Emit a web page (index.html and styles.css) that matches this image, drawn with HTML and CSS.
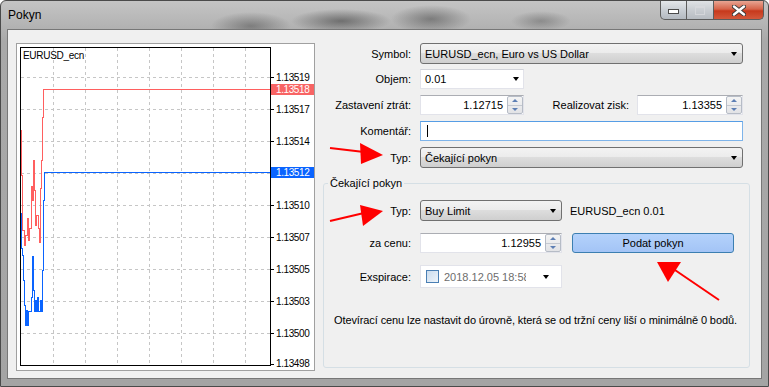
FILE: index.html
```html
<!DOCTYPE html>
<html lang="cs">
<head>
  <meta charset="UTF-8">
  <title>Pokyn</title>
  <link rel="stylesheet" href="styles.css">
</head>
<body>
  <div class="window">
    <div class="titlebar">
      <span class="title">Pokyn</span>
      <div class="caption">
        <span class="cap min"><i></i></span>
        <span class="cap max"><i></i></span>
        <span class="cap close">
          <svg width="14" height="11" viewBox="0 0 14 11">
            <path d="M2 1.5L12 9.5M12 1.5L2 9.5" stroke="#3a3a3a" stroke-width="4.2" stroke-linecap="round"/>
            <path d="M2 1.5L12 9.5M12 1.5L2 9.5" stroke="#fff" stroke-width="2.4" stroke-linecap="round"/>
          </svg>
        </span>
      </div>
    </div>

    <div class="client">
      <div class="chart-panel">
        <svg class="chart" width="297" height="326" viewBox="17 44 297 326">
          <rect x="17" y="44" width="297" height="326" fill="#fff"/>
          <path class="grid" d="M53.5 48V365M85.5 48V365M117.5 48V365M149.5 48V365M181.5 48V365M213.5 48V365M245.5 48V365"/>
          <path class="grid" d="M21 77.5H270M21 109.5H270M21 141.5H270M21 173.5H270M21 205.5H270M21 237.5H270M21 269.5H270M21 301.5H270M21 333.5H270"/>
          <rect x="20.5" y="47.5" width="250" height="318" fill="none" stroke="#000"/>
          <path stroke="#000" d="M270 77.5h4M270 109.5h4M270 141.5h4M270 173.5h4M270 205.5h4M270 237.5h4M270 269.5h4M270 301.5h4M270 333.5h4M270 364.5h4"/>

          <path class="ask" d="M21.5 130V175H22.5V230H24.5V245H25.5V235H27.5V218H28.5V240H29.5V228H31.5V186H32.5V200H33.5V160H34.5V190H35.5V225H36.5V215H38.5V228H39.5V242H40.5V188H41.5V160H42.5V117H43.5V89.5H270"/>
          <path class="bid" d="M21.5 213V248H22.5V255H23.5V280H24.5V305H25.5V325H26.5V310H27.5V325H28.5V311H31.5V297H32.5V256H33.5V290H34.5V311H35.5V300H36.5V311H37.5V297H38.5V311H40.5V300H41.5V311H42.5V270H43.5V200H44.5V172.5H270"/>

          <text class="sym" x="23" y="59">EURUSD_ecn</text>

          <g class="axis">
            <text x="276" y="81">1.13519</text>
            <rect x="271" y="84" width="43" height="11" fill="#f86464"/>
            <text x="276" y="93" fill="#fff">1.13518</text>
            <text x="276" y="113">1.13517</text>
            <text x="276" y="145">1.13514</text>
            <rect x="271" y="167" width="43" height="11" fill="#0a64ff"/>
            <text x="276" y="176" fill="#fff">1.13512</text>
            <text x="276" y="209">1.13510</text>
            <text x="276" y="241">1.13507</text>
            <text x="276" y="273">1.13505</text>
            <text x="276" y="305">1.13503</text>
            <text x="276" y="337">1.13500</text>
            <text x="276" y="367">1.13498</text>
          </g>
        </svg>
      </div>

      <div class="order-form">
        <div class="row r-symbol">
          <label>Symbol:</label>
          <div class="combo grow">EURUSD_ecn, Euro vs US Dollar<span class="caret"></span></div>
        </div>
        <div class="row">
          <label>Objem:</label>
          <div class="edit-combo w104">0.01<span class="caret"></span></div>
        </div>
        <div class="row">
          <label>Zastavení ztrát:</label>
          <div class="spin w104"><span class="val">1.12715</span><span class="arrows"><b class="up"></b><b class="down"></b></span></div>
          <span class="side-label">Realizovat zisk:</span>
          <div class="spin w106"><span class="val">1.13355</span><span class="arrows"><b class="up"></b><b class="down"></b></span></div>
        </div>
        <div class="row">
          <label>Komentář:</label>
          <div class="text-input grow"><span class="cursor"></span></div>
        </div>
        <div class="row r-type">
          <label>Typ:</label>
          <div class="combo grow">Čekající pokyn<span class="caret"></span></div>
        </div>

        <fieldset class="pending">
          <legend>Čekající pokyn</legend>
          <div class="row r-type">
            <label>Typ:</label>
            <div class="combo w142">Buy Limit<span class="caret"></span></div>
            <span class="order-info">EURUSD_ecn 0.01</span>
          </div>
          <div class="row">
            <label>za cenu:</label>
            <div class="spin w142"><span class="val">1.12955</span><span class="arrows"><b class="up"></b><b class="down"></b></span></div>
            <button class="submit">Podat pokyn</button>
          </div>
          <div class="row r-date">
            <label>Exspirace:</label>
            <div class="date w142"><span class="check"></span><span class="date-text">2018.12.05 18:58</span><span class="caret"></span></div>
          </div>
          <p class="note">Otevírací cenu lze nastavit do úrovně, která se od tržní ceny liší o minimálně 0 bodů.</p>
        </fieldset>
      </div>
    </div>

    <svg class="arrows-overlay" width="769" height="387" viewBox="0 0 769 387">
      <path d="M330 148L364 152" stroke="#f00" stroke-width="2"/>
      <polygon points="360,143 383,155 361,164" fill="#f00"/>
      <path d="M330 221L364 213" stroke="#f00" stroke-width="2"/>
      <polygon points="360,205 383,211 363,226" fill="#f00"/>
      <path d="M719 300L672 268" stroke="#f00" stroke-width="2"/>
      <polygon points="657,262 681,262 668,282" fill="#f00"/>
    </svg>
  </div>
</body>
</html>
```

FILE: styles.css
```css
body {
  margin: 0;
  background: #fff;
  font-family: "Liberation Sans", Arial, sans-serif;
  font-size: 11px;
  color: #000;
}

.window {
  position: relative;
  width: 769px;
  height: 387px;
  box-sizing: border-box;
  border: 1px solid #4a4a4a;
  border-radius: 6px 6px 0 0;
  background:
    radial-gradient(ellipse 40px 14px at 250px 25px, rgba(60, 60, 60, 0.45), transparent),
    radial-gradient(ellipse 50px 12px at 340px 20px, rgba(40, 40, 40, 0.5), transparent),
    radial-gradient(ellipse 40px 14px at 430px 18px, rgba(50, 50, 50, 0.45), transparent),
    radial-gradient(ellipse 30px 10px at 540px 20px, rgba(60, 60, 60, 0.35), transparent),
    linear-gradient(#c4c4c4, #a9a9a9 40px, #a4a4a4);
  overflow: hidden;
}

.titlebar {
  height: 28px;
  display: flex;
  align-items: flex-start;
  padding-left: 7px;
}

.title {
  font-size: 12px;
  line-height: 28px;
  color: #000;
}

.caption {
  margin-left: auto;
  margin-right: 4px;
  display: flex;
}

.cap {
  height: 19px;
  display: flex;
  align-items: center;
  justify-content: center;
  border: 1px solid #5c5c5c;
  border-top: none;
  box-sizing: border-box;
}

.min {
  width: 27px;
  border-radius: 0 0 0 5px;
  background: linear-gradient(#e4e7ea, #c9ced4 50%, #b3b9c0);
}

.min i {
  width: 9px;
  height: 3px;
  margin-top: 3px;
  background: #fff;
  border: 1px solid #4b4b4b;
}

.max {
  width: 27px;
  border-left: none;
  background: linear-gradient(#dfe2e5, #c9cdd2 50%, #b7bcc2);
}

.max i {
  width: 8px;
  height: 6px;
  border: 1px solid #d8dadd;
  border-top-width: 2px;
  opacity: 0.8;
}

.close {
  width: 50px;
  border-left: none;
  border-radius: 0 0 5px 0;
  background: linear-gradient(#e8a593, #d6644a 45%, #c7391c 55%, #d3583b);
}

.client {
  height: 350px;
  margin: 0 6px;
  box-sizing: border-box;
  border: 1px solid #777;
  background: #f0f0f0;
  display: flex;
  padding: 13px 0 0 8px;
}

.chart-panel {
  width: 297px;
  height: 326px;
  border: 1px solid #a0a0a0;
  flex-shrink: 0;
}

.chart {
  display: block;
}

.grid {
  stroke: #c6c6c6;
  stroke-dasharray: 3 3;
  fill: none;
}

.ask {
  stroke: #ff5f5f;
  fill: none;
  shape-rendering: crispEdges;
}

.bid {
  stroke: #0a64ff;
  fill: none;
  shape-rendering: crispEdges;
}

.sym {
  font-family: "Liberation Sans", Arial, sans-serif;
  font-size: 10px;
  letter-spacing: -0.3px;
}

.axis text {
  font-family: "Liberation Sans", Arial, sans-serif;
  font-size: 10px;
  letter-spacing: -0.4px;
}

.order-form {
  width: 427px;
  margin-left: 8px;
  display: flex;
  flex-direction: column;
}

.row {
  display: flex;
  align-items: center;
  height: 20px;
  margin-top: 6px;
  padding-right: 7px;
}

.r-symbol {
  margin-top: 0;
  height: 21px;
}

.row + .row:nth-child(2) {
  margin-top: 5px;
}

.r-type {
  height: 21px;
}

.row label {
  width: 88px;
  margin-right: 9px;
  text-align: right;
  flex-shrink: 0;
}

.grow {
  flex: 1;
}

.w104 { width: 104px; }
.w106 { width: 106px; }
.w142 { width: 142px; }

.combo {
  height: 21px;
  box-sizing: border-box;
  border: 1px solid #707070;
  border-radius: 3px;
  background: linear-gradient(#f3f3f3, #ebebeb 50%, #dddddd 50%, #cfcfcf);
  display: flex;
  align-items: center;
  padding-left: 4px;
}

.caret {
  margin-left: auto;
  margin-right: 5px;
  width: 0;
  height: 0;
  border-left: 3.5px solid transparent;
  border-right: 3.5px solid transparent;
  border-top: 4px solid #000;
}

.edit-combo {
  height: 20px;
  box-sizing: border-box;
  border: 1px solid #e2e3ea;
  border-top-color: #d2d4da;
  background: #fff;
  display: flex;
  align-items: center;
  padding-left: 4px;
}

.edit-combo .caret {
  margin-right: 4px;
}

.spin {
  height: 20px;
  box-sizing: border-box;
  border: 1px solid #e2e3ea;
  border-top-color: #abadb3;
  background: #fff;
  display: flex;
  align-items: center;
}

.spin .val {
  flex: 1;
  text-align: right;
  padding-right: 4px;
}

.arrows {
  width: 16px;
  height: 18px;
  display: flex;
  flex-direction: column;
  border: 1px solid #b6bcc6;
  border-radius: 2px;
  box-sizing: border-box;
  background: linear-gradient(#f4f4f4, #e2e3e6);
}

.arrows b {
  flex: 1;
  display: flex;
  align-items: center;
  justify-content: center;
}

.arrows .up {
  border-bottom: 1px solid #c4c9d1;
}

.arrows .up::after,
.arrows .down::after {
  content: "";
  border-left: 3px solid transparent;
  border-right: 3px solid transparent;
}

.arrows .up::after {
  border-bottom: 3px solid #5d7fb4;
}

.arrows .down::after {
  border-top: 3px solid #5d7fb4;
}

.side-label {
  flex: 1;
  text-align: right;
  margin-right: 8px;
}

.text-input {
  height: 20px;
  box-sizing: border-box;
  border: 1px solid #7eb4ea;
  border-top-color: #569de5;
  background: #fff;
  display: flex;
  align-items: center;
  padding-left: 6px;
}

.cursor {
  width: 1px;
  height: 12px;
  background: #000;
}

.pending {
  margin: 9px 0 0 0;
  padding: 10px 0 0 0;
  min-width: 0;
  height: 191px;
  box-sizing: border-box;
  border: 1px solid #d5dfe5;
  border-radius: 3px;
}

.pending legend {
  margin-left: 4px;
  padding: 0 2px;
  line-height: 13px;
}

.pending .row {
  padding-right: 0;
}

.pending .row:first-of-type {
  margin-top: 0;
}

.pending .row + .row {
  margin-top: 12px;
}

.pending .row label {
  width: 87px;
}

.order-info {
  margin-left: 8px;
}

.submit {
  margin-left: 10px;
  width: 162px;
  height: 20px;
  font-family: inherit;
  font-size: 11px;
  border: 1px solid #3c7fb1;
  border-radius: 3px;
  background: linear-gradient(#b4d2fb, #a3c4f6);
  padding: 0;
}

.r-date {
  height: 23px;
}

.date {
  height: 23px;
  box-sizing: border-box;
  border: 1px solid #e2e3ea;
  background: #fff;
  display: flex;
  align-items: center;
  padding-left: 5px;
}

.check {
  width: 11px;
  height: 11px;
  border: 1px solid #4a7fb4;
  background: linear-gradient(135deg, #cbdcee, #eef4fa);
  flex-shrink: 0;
}

.date-text {
  margin-left: 5px;
  width: 82px;
  overflow: hidden;
  white-space: nowrap;
  color: #6d6d6d;
}

.date .caret {
  margin-right: 12px;
}

.note {
  margin: 26px 0 0 10px;
  line-height: 13px;
  letter-spacing: -0.1px;
}

.arrows-overlay {
  position: absolute;
  top: -1px;
  left: -1px;
  pointer-events: none;
}
```
